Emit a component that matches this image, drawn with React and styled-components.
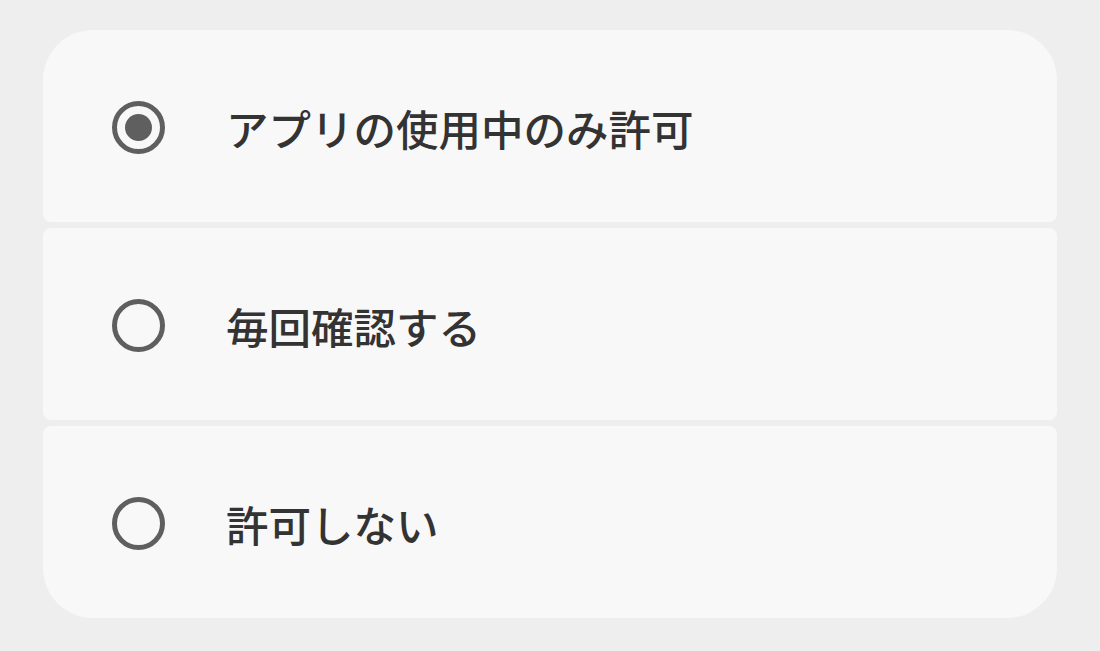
import React, { useState } from "react";
import styled, { createGlobalStyle } from "styled-components";

const Global = createGlobalStyle`
  html, body { margin: 0; padding: 0; background: #eeeeee; }
  body { font-family: "Noto Sans CJK JP", "Noto Sans", sans-serif; }
`;

const Page = styled.div`
  width: 1100px;
  height: 651px;
  box-sizing: border-box;
  padding: 30px 43px 0 43px;
  background: #eeeeee;
`;

const List = styled.div`
  display: flex;
  flex-direction: column;
  gap: 6px;
`;

const Row = styled.label`
  height: 192px;
  display: flex;
  align-items: center;
  background: #f8f8f8;
  border-radius: ${(p) =>
    p.$first ? "50px 50px 8px 8px" : p.$last ? "8px 8px 50px 50px" : "8px"};
  padding-left: 69px;
  cursor: pointer;
`;

const Radio = styled.span`
  width: 53px;
  height: 53px;
  box-sizing: border-box;
  border: 5px solid #5f5f5f;
  border-radius: 50%;
  display: flex;
  align-items: center;
  justify-content: center;
  flex-shrink: 0;
  margin-top: 2px;
  &::after {
    content: "";
    width: 27px;
    height: 27px;
    border-radius: 50%;
    background: #5f5f5f;
    display: ${(p) => (p.$checked ? "block" : "none")};
  }
`;

const Label = styled.span`
  margin-left: 61px;
  font-size: 42.5px;
  font-weight: 500;
  color: #333333;
  line-height: 1;
  margin-top: 4px;
`;

const options = ["アプリの使用中のみ許可", "毎回確認する", "許可しない"];

export default function App() {
  const [sel, setSel] = useState(0);
  return (
    <>
      <Global />
      <Page>
        <List>
          {options.map((o, i) => (
            <Row
              key={o}
              $first={i === 0}
              $last={i === options.length - 1}
              onClick={() => setSel(i)}
            >
              <Radio $checked={sel === i} />
              <Label>{o}</Label>
            </Row>
          ))}
        </List>
      </Page>
    </>
  );
}
